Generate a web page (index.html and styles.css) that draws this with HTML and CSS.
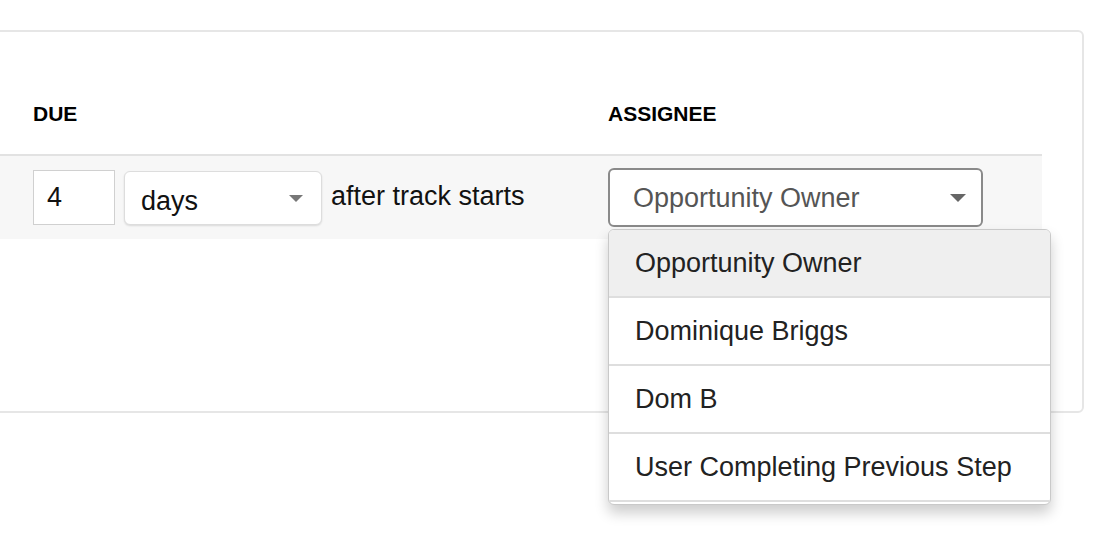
FILE: index.html
```html
<!DOCTYPE html>
<html lang="en">
<head>
    <meta charset="UTF-8">
    <meta name="viewport" content="width=device-width, initial-scale=1.0">
    <title>Track Step</title>
    <link rel="stylesheet" href="styles.css">
</head>
<body>

    <div class="step-card">
        <div class="step-grid step-header">
            <div class="col-label">DUE</div>
            <div class="col-label">ASSIGNEE</div>
        </div>

        <div class="step-grid step-row">
            <div class="due-cell">
                <input class="due-number" type="text" value="4">
                <div class="unit-select">
                    <span>days</span>
                    <svg class="caret" width="14" height="7" viewBox="0 0 14 7"><path d="M0 0 L14 0 L7 7 Z" fill="#777"></path></svg>
                </div>
                <span class="due-text">after track starts</span>
            </div>

            <div class="assignee-cell">
                <div class="assignee-select">
                    <span>Opportunity Owner</span>
                    <svg class="caret" width="16" height="8" viewBox="0 0 16 8"><path d="M0 0 L16 0 L8 8 Z" fill="#666"></path></svg>
                </div>

                <ul class="assignee-menu">
                    <li class="menu-item active">Opportunity Owner</li>
                    <li class="menu-item">Dominique Briggs</li>
                    <li class="menu-item">Dom B</li>
                    <li class="menu-item">User Completing Previous Step</li>
                </ul>
            </div>
        </div>
    </div>

</body>
</html>
```

FILE: styles.css
```css
html {
    height: 100%;
}

body {
    font-family: "Liberation Sans", Arial, Helvetica, sans-serif;
    background-color: #ffffff;
    margin: 0;
    min-height: 100%;
    padding-top: 30px;
    box-sizing: border-box;
    color: #111111;
}

.step-card {
    box-sizing: border-box;
    margin-left: -10px;
    width: 1094px;
    height: 383px;
    border: 2px solid #e6e6e6;
    border-radius: 6px;
    padding-right: 40px;
}

.step-grid {
    display: grid;
    grid-template-columns: 575px 1fr;
    padding-left: 41px;
}

.step-header {
    padding-top: 70px;
    padding-bottom: 28px;
}

.col-label {
    font-size: 21px;
    font-weight: bold;
    line-height: 24px;
    color: #000000;
}

.step-row {
    background-color: #f7f7f7;
    border-top: 2px solid #e2e2e2;
    height: 85px;
    box-sizing: border-box;
    padding-top: 14px;
}

.due-cell {
    display: flex;
    align-items: flex-start;
    gap: 9px;
    font-size: 27px;
}

.due-number {
    box-sizing: border-box;
    width: 82px;
    height: 55px;
    border: 1px solid #d0d0d0;
    background-color: #ffffff;
    padding: 0 0 0 13px;
    margin: 0;
    font-family: inherit;
    font-size: 27px;
    line-height: 53px;
    color: #111111;
    outline: none;
}

.unit-select {
    box-sizing: border-box;
    width: 198px;
    height: 54px;
    margin-top: 1px;
    border: 1px solid #dddddd;
    border-radius: 6px;
    background-color: #ffffff;
    box-shadow: 0 1px 2px rgba(0, 0, 0, 0.12);
    display: flex;
    align-items: center;
    justify-content: space-between;
    padding: 6px 18px 0 16px;
    line-height: 32px;
    color: #111111;
}

.unit-select .caret {
    margin-top: -6px;
}

.due-text {
    margin-top: 10px;
    line-height: 32px;
    color: #111111;
}

.assignee-cell {
    position: relative;
}

.assignee-select {
    box-sizing: border-box;
    width: 375px;
    height: 59px;
    border: 2px solid #8a8a8a;
    border-radius: 6px;
    background-color: #ffffff;
    margin-top: -2px;
    display: flex;
    align-items: center;
    justify-content: space-between;
    padding: 1px 15px 0 23px;
    font-size: 27px;
    line-height: 55px;
    color: #555555;
}

.assignee-menu {
    position: absolute;
    top: 59px;
    left: 0;
    width: 443px;
    box-sizing: border-box;
    list-style-type: none;
    margin: 0;
    padding: 0;
    background-color: #ffffff;
    border: 1px solid #c9c9c9;
    border-radius: 6px;
    box-shadow: 0 8px 14px rgba(0, 0, 0, 0.2);
    overflow: hidden;
    z-index: 2;
}

.menu-item {
    height: 66px;
    border-bottom: 2px solid #dedede;
    padding-left: 26px;
    font-size: 27px;
    line-height: 66px;
    color: #222222;
}

.menu-item:last-child {
    margin-bottom: 2px;
}

.menu-item.active {
    background-color: #efefef;
}
```
